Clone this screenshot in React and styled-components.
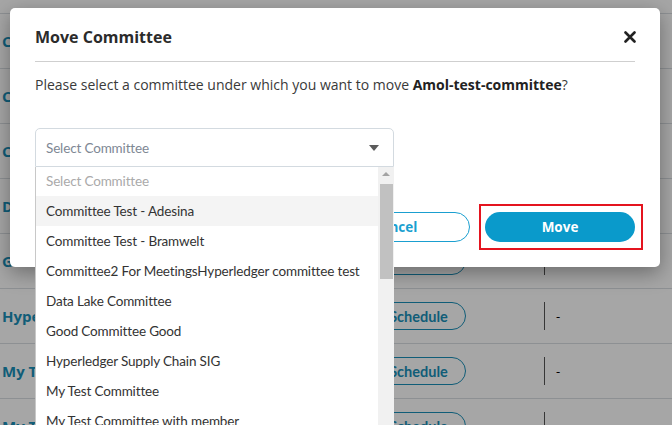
import React from "react";
import styled, { createGlobalStyle } from "styled-components";

const GlobalStyle = createGlobalStyle`
  html, body {
    margin: 0;
    padding: 0;
    background: #ffffff;
    font-family: "Open Sans", "Noto Sans", sans-serif;
  }
  * { box-sizing: border-box; }
`;

const rows = [
  { name: "Committee Meetings", action: "Join", filled: true },
  { name: "Committee Test - Adesina", action: "Schedule" },
  { name: "Committee Test - Bramwelt", action: "Schedule" },
  { name: "Committee2 For Meetings", action: "Schedule" },
  { name: "Data Lake Committee", action: "Schedule" },
  { name: "Good Committee Good", action: "Schedule" },
  { name: "Hyperledger Supply Chain SIG", action: "Schedule" },
  { name: "My Test Committee", action: "Schedule" },
  { name: "My Test Committee with member", action: "Schedule" },
];

const options = [
  "Committee Test - Adesina",
  "Committee Test - Bramwelt",
  "Committee2 For MeetingsHyperledger committee test",
  "Data Lake Committee",
  "Good Committee Good",
  "Hyperledger Supply Chain SIG",
  "My Test Committee",
  "My Test Committee with member",
  "Open Source Committee",
];

const App = () => {
  return (
    <Page>
      <GlobalStyle />
      <Table>
        {rows.map((row) => (
          <Row key={row.name}>
            <NameCell>{row.name}</NameCell>
            <Cell />
            <ActionCell>
              <RowButton filled={row.filled}>{row.action}</RowButton>
            </ActionCell>
            <DashCell>-</DashCell>
          </Row>
        ))}
      </Table>

      <Overlay>
        <Modal>
          <Header>
            <Title>Move Committee</Title>
            <Close aria-label="close">
              <svg width="12" height="12" viewBox="0 0 12 12">
                <path
                  d="M1.5 1.5 L10.5 10.5 M10.5 1.5 L1.5 10.5"
                  stroke="#222"
                  strokeWidth="2.6"
                  strokeLinecap="round"
                />
              </svg>
            </Close>
          </Header>
          <Body>
            <Message>
              Please select a committee under which you want to move{" "}
              <strong>Amol-test-committee</strong>?
            </Message>
            <SelectWrap>
              <SelectBox>
                <Placeholder>Select Committee</Placeholder>
                <Caret />
              </SelectBox>
              <DropList>
                <Options>
                  <Option muted>Select Committee</Option>
                  {options.map((opt, i) => (
                    <Option key={opt} active={i === 0}>
                      {opt}
                    </Option>
                  ))}
                </Options>
                <ScrollBar>
                  <ArrowUp />
                  <Thumb />
                  <ArrowDown />
                </ScrollBar>
              </DropList>
            </SelectWrap>
            <Footer>
              <OutlineButton>Cancel</OutlineButton>
              <Highlight>
                <PrimaryButton>Move</PrimaryButton>
              </Highlight>
            </Footer>
          </Body>
        </Modal>
      </Overlay>
    </Page>
  );
};

export default App;

const Page = styled.div`
  position: relative;
  width: 672px;
  height: 425px;
  overflow: hidden;
  background: #ffffff;
`;

const Table = styled.div`
  margin-top: -41px;
  display: flex;
  flex-direction: column;
`;

const Row = styled.div`
  display: grid;
  grid-template-columns: 176px 183px 185px 1fr;
  align-items: center;
  height: 55px;
  border-bottom: 1px solid #d9dee2;
`;

const Cell = styled.div`
  height: 28px;
`;

const NameCell = styled.div`
  padding-left: 2px;
  font-size: 15px;
  font-weight: 700;
  color: #1a8fb8;
  white-space: nowrap;
  overflow: hidden;
`;

const ActionCell = styled.div`
  display: flex;
  justify-content: flex-start;
`;

const RowButton = styled.div`
  width: ${(p) => (p.filled ? "76px" : "101px")};
  margin-left: ${(p) => (p.filled ? "20px" : "6px")};
  height: 28px;
  border-radius: 14px;
  border: 1.5px solid #1a8fb8;
  background: ${(p) => (p.filled ? "#1a8fb8" : "transparent")};
  color: ${(p) => (p.filled ? "#fff" : "#1a8fb8")};
  font-family: "Lato", "Open Sans", sans-serif;
  font-size: 14.5px;
  font-weight: 700;
  display: flex;
  align-items: center;
  justify-content: center;
  padding-left: 6px;
`;

const DashCell = styled.div`
  height: 28px;
  border-left: 1px solid #555;
  padding-left: 11px;
  display: flex;
  align-items: center;
  font-size: 13px;
  color: #000;
`;

const Overlay = styled.div`
  position: absolute;
  inset: 0;
  background: rgba(0, 0, 0, 0.35);
  display: flex;
  align-items: flex-start;
  padding: 8px 0 0 10px;
`;

const Modal = styled.div`
  width: 650px;
  background: #ffffff;
  border-radius: 5px;
  box-shadow: 0 6px 20px rgba(0, 0, 0, 0.35);
  padding: 0 25px 25px;
`;

const Header = styled.div`
  display: flex;
  align-items: center;
  justify-content: space-between;
  padding: 18px 0 13px;
  border-bottom: 1px solid #cfcfcf;
`;

const Title = styled.h2`
  margin: 0;
  font-size: 16px;
  line-height: 22px;
  font-weight: 700;
  color: #2b2b2b;
`;

const Close = styled.div`
  display: flex;
  align-items: center;
  margin-right: -1px;
`;

const Body = styled.div`
  padding-top: 13px;
`;

const Message = styled.p`
  margin: 0;
  font-size: 14px;
  line-height: 20px;
  color: #3a3a3a;

  strong {
    font-weight: 700;
    color: #222;
  }
`;

const SelectWrap = styled.div`
  position: relative;
  width: 359px;
  margin-top: 33px;
`;

const SelectBox = styled.div`
  height: 39px;
  border: 1px solid #d3dae0;
  border-radius: 5px 5px 0 0;
  display: flex;
  align-items: center;
  justify-content: space-between;
  padding: 0 14px 0 10px;
  font-family: "Lato", "Open Sans", sans-serif;
`;

const Placeholder = styled.span`
  font-size: 13.5px;
  letter-spacing: -0.15px;
  color: #7e8894;
`;

const Caret = styled.span`
  width: 0;
  height: 0;
  border-left: 5.5px solid transparent;
  border-right: 5.5px solid transparent;
  border-top: 6px solid #5b5b5b;
`;

const DropList = styled.div`
  position: absolute;
  top: 100%;
  left: 0;
  right: 0;
  height: 258px;
  background: #fff;
  border-left: 1px solid #c8c8c8;
  display: grid;
  grid-template-columns: 1fr 16px;
  overflow: hidden;
  z-index: 3;
`;

const Options = styled.div`
  display: flex;
  flex-direction: column;
  font-family: "Lato", "Open Sans", sans-serif;
  margin-top: -1px;
`;

const Option = styled.div`
  flex: 0 0 30px;
  height: 30px;
  display: flex;
  align-items: center;
  padding-left: 10px;
  font-size: 13.5px;
  letter-spacing: -0.15px;
  white-space: nowrap;
  color: ${(p) => (p.muted ? "#aaaaaa" : "#333333")};
  background: ${(p) => (p.active ? "#f4f4f4" : "transparent")};
`;

const ScrollBar = styled.div`
  position: relative;
  background: #f1f1f1;
  display: flex;
  flex-direction: column;
  align-items: center;
`;

const ArrowUp = styled.span`
  margin-top: 5px;
  width: 0;
  height: 0;
  border-left: 4px solid transparent;
  border-right: 4px solid transparent;
  border-bottom: 4px solid #a3a3a3;
`;

const Thumb = styled.div`
  margin-top: 8px;
  width: 13px;
  height: 95px;
  background: #c1c1c1;
`;

const ArrowDown = styled.span`
  position: absolute;
  bottom: 10px;
  width: 0;
  height: 0;
  border-left: 4px solid transparent;
  border-right: 4px solid transparent;
  border-top: 4px solid #505050;
`;

const Footer = styled.div`
  display: flex;
  justify-content: flex-end;
  gap: 15px;
  margin-top: 45px;
`;

const PillBase = styled.button`
  width: 150px;
  height: 30px;
  border-radius: 15px;
  font-family: "Open Sans", sans-serif;
  font-size: 13.5px;
  font-weight: 700;
  cursor: pointer;
`;

const OutlineButton = styled(PillBase)`
  background: #fff;
  border: 1.5px solid #1a9fd0;
  color: #1a9fd0;
`;

const PrimaryButton = styled(PillBase)`
  background: #0a9acb;
  border: none;
  color: #fff;
`;

const Highlight = styled.div`
  position: relative;

  &::after {
    content: "";
    position: absolute;
    top: -8px;
    bottom: -8px;
    left: -6px;
    right: -8px;
    border: 2px solid #e4141f;
    pointer-events: none;
  }
`;
